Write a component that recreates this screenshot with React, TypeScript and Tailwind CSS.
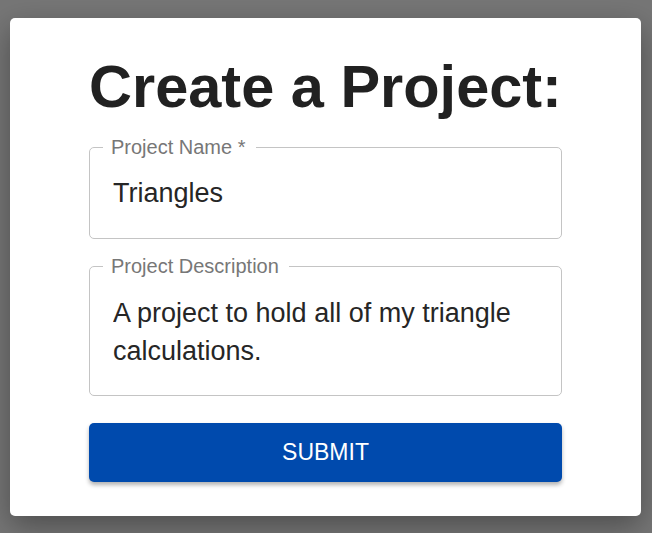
import React, { useState } from "react";

export default function App() {
  const [name, setName] = useState("Triangles");
  const [desc, setDesc] = useState(
    "A project to hold all of my triangle calculations."
  );

  return (
    <div
      className="w-[652px] h-[533px] bg-[#767676] pt-[18px] pl-[10px] pr-[11px] overflow-hidden"
      style={{ fontFamily: '"Liberation Sans", Arial, sans-serif' }}
    >
      <div className="h-[498px] bg-white rounded-[5px] shadow-[0_10px_30px_rgba(0,0,0,0.35)] flex flex-col items-center">
        {/* Titulo */}
        <h1 className="mt-[34px] text-[59.5px] leading-[70px] font-bold text-[#212121]">
          Create a Project:
        </h1>

        <div className="w-[473px] mt-[25px] flex flex-col">
          {/* Nome */}
          <fieldset className="h-[101px] border border-[#c4c4c4] rounded-[5px] px-[23px] -mt-[9px]">
            <legend className="ml-[-10px] pl-[8px] pr-[10px] text-[20px] leading-[18px] text-[#777]">
              Project Name *
            </legend>
            <input
              value={name}
              onChange={(e) => setName(e.target.value)}
              className="w-full mt-[21px] text-[27px] leading-[32px] text-[#262626] outline-none bg-transparent"
            />
          </fieldset>

          {/* Descricao */}
          <fieldset className="h-[139px] mt-[18px] border border-[#c4c4c4] rounded-[5px] px-[23px]">
            <legend className="ml-[-10px] pl-[8px] pr-[10px] text-[20px] leading-[18px] text-[#777]">
              Project Description
            </legend>
            <textarea
              value={desc}
              onChange={(e) => setDesc(e.target.value)}
              rows={2}
              className="w-full mt-[19px] resize-none text-[27px] leading-[38px] text-[#262626] outline-none bg-transparent"
            />
          </fieldset>

          <button className="mt-[27px] h-[59px] rounded-[5px] bg-[#004aad] text-white text-[23px] shadow-[0_3px_4px_rgba(0,0,0,0.3)]">
            SUBMIT
          </button>
        </div>
      </div>
    </div>
  );
}
